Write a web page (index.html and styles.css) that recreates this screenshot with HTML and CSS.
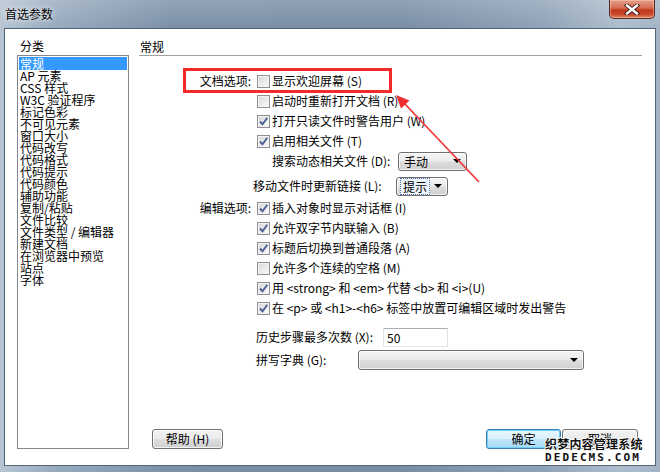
FILE: index.html
```html
<!DOCTYPE html>
<html>
	<head>
		<meta charset="UTF-8">
		<title>首选参数</title>
		<link rel="stylesheet" href="styles.css">
	</head>
	<body>
		<div class="window">
			<div class="titlebar">
				<span class="title">首选参数</span>
				<span class="close">
					<svg width="16" height="11" viewBox="0 0 16 11">
						<path d="M3 1.5 L13 9.5 M13 1.5 L3 9.5" stroke="#3a1a14" stroke-width="4.2" stroke-linecap="square"/>
						<path d="M3 1.5 L13 9.5 M13 1.5 L3 9.5" stroke="#fff" stroke-width="2.4" stroke-linecap="square"/>
					</svg>
				</span>
			</div>
			<div class="client">
				<div class="side">
					<div class="side-label">分类</div>
					<ul class="cat-list">
						<li class="selected">常规</li>
						<li>AP 元素</li>
						<li>CSS 样式</li>
						<li>W3C 验证程序</li>
						<li>标记色彩</li>
						<li>不可见元素</li>
						<li>窗口大小</li>
						<li>代码改写</li>
						<li>代码格式</li>
						<li>代码提示</li>
						<li>代码颜色</li>
						<li>辅助功能</li>
						<li>复制/粘贴</li>
						<li>文件比较</li>
						<li>文件类型 / 编辑器</li>
						<li>新建文档</li>
						<li>在浏览器中预览</li>
						<li>站点</li>
						<li>字体</li>
					</ul>
				</div>
				<div class="main">
					<div class="main-head">常规</div>
					<div class="form">
						<div class="row">
							<span class="lbl">文档选项:</span>
							<span class="cb"></span><span class="txt">显示欢迎屏幕 (S)</span>
						</div>
						<div class="row">
							<span class="lbl"></span>
							<span class="cb"></span><span class="txt">启动时重新打开文档 (R)</span>
						</div>
						<div class="row">
							<span class="lbl"></span>
							<span class="cb"><svg width="11" height="11" viewBox="0 0 11 11"><path d="M2 5.5 L4.5 8.3 L9.3 1.8" fill="none" stroke="#4a5e95" stroke-width="1.9"/></svg></span><span class="txt">打开只读文件时警告用户 (W)</span>
						</div>
						<div class="row">
							<span class="lbl"></span>
							<span class="cb"><svg width="11" height="11" viewBox="0 0 11 11"><path d="M2 5.5 L4.5 8.3 L9.3 1.8" fill="none" stroke="#4a5e95" stroke-width="1.9"/></svg></span><span class="txt">启用相关文件 (T)</span>
						</div>
						<div class="row">
							<span class="lbl"></span>
							<span class="field-lbl search-lbl">搜索动态相关文件 (D):</span>
							<span class="combo combo-search"><span class="combo-text">手动</span><i class="caret"></i></span>
						</div>
						<div class="row row-links">
							<span class="lbl"></span>
							<span class="field-lbl links-lbl">移动文件时更新链接 (L):</span>
							<span class="combo combo-links"><span class="combo-text focus">提示</span><i class="caret"></i></span>
						</div>
						<div class="row row-edit">
							<span class="lbl">编辑选项:</span>
							<span class="cb"><svg width="11" height="11" viewBox="0 0 11 11"><path d="M2 5.5 L4.5 8.3 L9.3 1.8" fill="none" stroke="#4a5e95" stroke-width="1.9"/></svg></span><span class="txt">插入对象时显示对话框 (I)</span>
						</div>
						<div class="row">
							<span class="lbl"></span>
							<span class="cb"><svg width="11" height="11" viewBox="0 0 11 11"><path d="M2 5.5 L4.5 8.3 L9.3 1.8" fill="none" stroke="#4a5e95" stroke-width="1.9"/></svg></span><span class="txt">允许双字节内联输入 (B)</span>
						</div>
						<div class="row">
							<span class="lbl"></span>
							<span class="cb"><svg width="11" height="11" viewBox="0 0 11 11"><path d="M2 5.5 L4.5 8.3 L9.3 1.8" fill="none" stroke="#4a5e95" stroke-width="1.9"/></svg></span><span class="txt">标题后切换到普通段落 (A)</span>
						</div>
						<div class="row">
							<span class="lbl"></span>
							<span class="cb"></span><span class="txt">允许多个连续的空格 (M)</span>
						</div>
						<div class="row">
							<span class="lbl"></span>
							<span class="cb"><svg width="11" height="11" viewBox="0 0 11 11"><path d="M2 5.5 L4.5 8.3 L9.3 1.8" fill="none" stroke="#4a5e95" stroke-width="1.9"/></svg></span><span class="txt">用 &lt;strong&gt; 和 &lt;em&gt; 代替 &lt;b&gt; 和 &lt;i&gt;(U)</span>
						</div>
						<div class="row">
							<span class="lbl"></span>
							<span class="cb"><svg width="11" height="11" viewBox="0 0 11 11"><path d="M2 5.5 L4.5 8.3 L9.3 1.8" fill="none" stroke="#4a5e95" stroke-width="1.9"/></svg></span><span class="txt">在 &lt;p&gt; 或 &lt;h1&gt;-&lt;h6&gt; 标签中放置可编辑区域时发出警告</span>
						</div>
						<div class="row row-history">
							<span class="lbl"></span>
							<span class="field-lbl history-lbl">历史步骤最多次数 (X):</span>
							<span class="textbox">50</span>
						</div>
						<div class="row row-spell">
							<span class="lbl"></span>
							<span class="field-lbl spell-lbl">拼写字典 (G):</span>
							<span class="combo combo-spell"><span class="combo-text"></span><i class="caret"></i></span>
						</div>
					</div>
					<div class="buttons">
						<span class="btn btn-help">帮助 (H)</span>
						<span class="btn btn-ok">确定</span>
						<span class="btn btn-cancel">取消</span>
					</div>
				</div>
			</div>

			<div class="mark-box"></div>
			<svg class="mark-arrow" width="660" height="472" viewBox="0 0 660 472">
				<line x1="404" y1="103" x2="479" y2="182" stroke="#ee3a3a" stroke-width="1.8"/>
				<polygon points="396,95 401,108.5 409.5,100.5" fill="#ee2f2f"/>
			</svg>
			<div class="watermark">
				<div class="wm-cn">织梦内容管理系统</div>
				<div class="wm-en">DEDECMS.COM</div>
			</div>
		</div>
	</body>
</html>
```

FILE: styles.css
```css
*{
	box-sizing: border-box;
}
body{
	margin: 0;
	font: 12px/1.2 "Noto Sans CJK SC", "Liberation Sans", sans-serif;
	color: #000;
}
.window{
	position: relative;
	width: 660px;
	height: 472px;
	overflow: hidden;
	background:
		linear-gradient(180deg, rgba(255,255,255,0.18) 0, rgba(255,255,255,0) 28px),
		linear-gradient(90deg, #b7c5d3 0, #98abbf 8%, #7b90a7 26%, #788da4 60%, #8ea2b7 82%, #aebdcc 94%, #a3b4c6 100%);
}
.titlebar{
	display: flex;
	align-items: flex-start;
	height: 28px;
}
.title{
	padding: 6px 0 0 5px;
	line-height: 15px;
	text-shadow: 0 0 6px rgba(255,255,255,0.9), 0 0 2px rgba(255,255,255,0.8);
}
.close{
	display: flex;
	align-items: center;
	justify-content: center;
	width: 46px;
	height: 19px;
	margin-left: auto;
	margin-right: 5px;
	border: 1px solid #5a2a22;
	border-top: none;
	border-radius: 0 0 5px 5px;
	background: linear-gradient(180deg, #e4a08d 0, #d66a51 45%, #c2391c 55%, #c84a2c 80%, #e08a6a 100%);
	box-shadow: inset 0 0 0 1px rgba(255,210,190,0.45);
}
.client{
	display: flex;
	width: 652px;
	height: 438px;
	margin-left: 4px;
	padding: 9px 13px 16px 12px;
	border: 1px solid #56667a;
	background: #fff;
}

/* left category list */
.side{
	display: flex;
	flex-direction: column;
	width: 112px;
	margin-right: 10px;
}
.side-label{
	height: 16px;
	line-height: 16px;
	padding-left: 3px;
}
.cat-list{
	height: 394px;
	margin: 1px 0 0;
	padding: 1px;
	list-style: none;
	border: 1px solid #828790;
}
.cat-list li{
	height: 12px;
	line-height: 12px;
	padding-left: 1px;
	white-space: nowrap;
}
.cat-list li.selected{
	height: 13px;
	padding-top: 1px;
	background: #3399ff;
	color: #fff;
}

/* right panel */
.main{
	display: flex;
	flex-direction: column;
	width: 503px;
}
.main-head{
	height: 18px;
	line-height: 17px;
	padding-left: 1px;
	border-bottom: 1px solid #a0a0a0;
}
.form{
	padding-top: 15px;
}
.row{
	display: flex;
	align-items: center;
	height: 20px;
	white-space: nowrap;
}
.lbl{
	flex: none;
	width: 112px;
	margin-right: 6px;
	text-align: right;
}
.cb{
	flex: none;
	display: flex;
	align-items: center;
	justify-content: center;
	width: 13px;
	height: 13px;
	margin-right: 2px;
	border: 1px solid #8e8f8f;
	background: linear-gradient(135deg, #d4d4d4 0, #ececec 55%, #fbfbfb 100%);
	box-shadow: inset 0 0 0 1px #f3f3f3;
}
.field-lbl{
	flex: none;
}
.search-lbl{
	width: 126px;
	margin-left: 15px;
}
.row-links{
	margin-top: 5px;
}
.links-lbl{
	width: 143px;
	margin-left: -4px;
}
.row-edit{
	height: 19px;
	margin-top: 3px;
}
.row-history{
	margin-top: 9px;
}
.history-lbl{
	width: 127px;
	margin-left: -1px;
}
.row-spell{
	margin-top: 3px;
}
.spell-lbl{
	width: 102px;
	margin-left: -1px;
}
.combo{
	display: flex;
	align-items: center;
	height: 19px;
	padding: 0 5px 0 3px;
	border: 1px solid #707070;
	border-radius: 3px;
	background: linear-gradient(180deg, #f4f4f4 0, #ebebeb 48%, #dddddd 52%, #d0d0d0 100%);
	box-shadow: inset 0 0 0 1px rgba(255,255,255,0.7);
}
.combo-text{
	flex: 1;
	padding-left: 2px;
	line-height: 15px;
}
.combo-text.focus{
	flex: none;
	margin-right: auto;
	padding: 0 2px;
	border: 1px dotted #4a6ea0;
	background: #eef4fb;
}
.caret{
	width: 0;
	height: 0;
	border-left: 4px solid transparent;
	border-right: 4px solid transparent;
	border-top: 4px solid #000;
}
.combo-search{
	width: 69px;
}
.combo-links{
	width: 52px;
}
.combo-spell{
	width: 226px;
	height: 20px;
}
.textbox{
	width: 65px;
	height: 19px;
	padding-left: 3px;
	line-height: 17px;
	border: 1px solid #e2e3ea;
	border-top-color: #abadb3;
	border-bottom-color: #e3e9ef;
}

/* bottom buttons */
.buttons{
	display: flex;
	margin-top: auto;
	padding: 0 4px 0 13px;
}
.btn{
	display: flex;
	align-items: center;
	justify-content: center;
	height: 20px;
	border: 1px solid #707070;
	border-radius: 3px;
	background: linear-gradient(180deg, #f2f2f2 0, #ebebeb 48%, #dddddd 52%, #cfcfcf 100%);
	box-shadow: inset 0 0 0 1px rgba(255,255,255,0.75);
}
.btn-help{
	width: 71px;
}
.btn-ok{
	width: 75px;
	margin-left: auto;
	margin-right: 1px;
	border-color: #3c7fb1;
	background: linear-gradient(180deg, #eaf6fd 0, #d9f0fc 48%, #bee6fd 52%, #a7d9f5 100%);
	box-shadow: inset 0 0 0 1px #6fd0f8;
}
.btn-cancel{
	width: 76px;
}

/* annotations drawn over the screenshot */
.mark-box{
	position: absolute;
	left: 183px;
	top: 68px;
	width: 209px;
	height: 25px;
	border: 3px solid #f22a2a;
}
.mark-arrow{
	position: absolute;
	left: 0;
	top: 0;
	pointer-events: none;
}
.watermark{
	position: absolute;
	left: 545px;
	top: 437px;
	font-weight: bold;
	color: #111;
	text-shadow: 1px 0 0 #fff, -1px 0 0 #fff, 0 1px 0 #fff, 0 -1px 0 #fff;
}
.wm-cn{
	font-size: 12px;
	line-height: 14px;
	letter-spacing: 0.2px;
}
.wm-en{
	margin-top: 1px;
	font: bold 11px/12px "DejaVu Sans Mono", monospace;
	letter-spacing: 2.1px;
}
```
